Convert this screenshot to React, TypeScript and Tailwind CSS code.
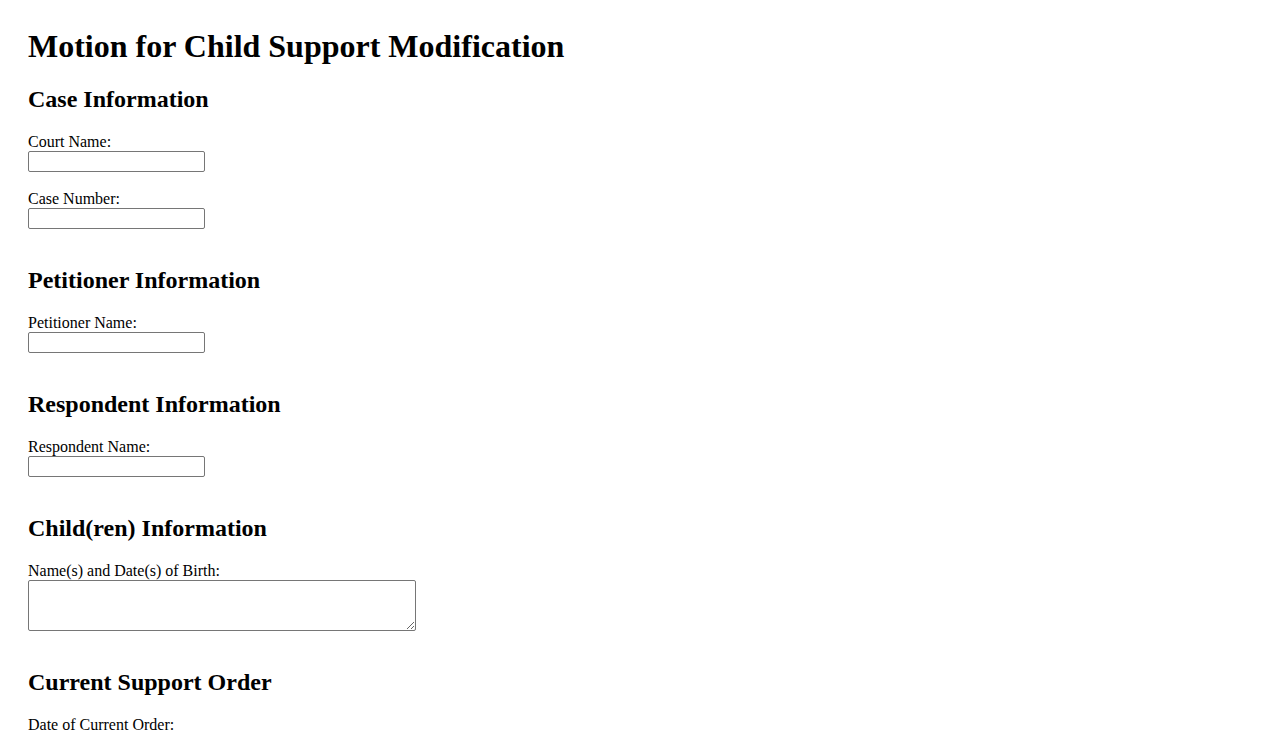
import React from "react";

const serif = { fontFamily: '"Liberation Serif", "Times New Roman", serif' };

function Field({ label, last }: { label: string; last?: boolean }) {
  return (
    <div className={last ? "mb-[37px]" : "mb-[18px]"}>
      <label className="block text-[16px] leading-[18px] text-black">{label}</label>
      <input
        type="text"
        className="block h-[21px] w-[177px] rounded-[2px] border border-[#767676] bg-white px-[2px] text-[13px] outline-none"
      />
    </div>
  );
}

function Section({ title, children }: { title: string; children: React.ReactNode }) {
  return (
    <section>
      <h2 className="mb-[20px] text-[24px] font-bold leading-[28px] text-black">{title}</h2>
      {children}
    </section>
  );
}

export default function App() {
  return (
    <div className="min-h-screen bg-white px-[28px] pt-[28px] text-black" style={serif}>
      <h1 className="mb-[20px] text-[32px] font-bold leading-[37px]">Motion for Child Support Modification</h1>

      <Section title="Case Information">
        <Field label="Court Name:" />
        <Field label="Case Number:" last />
      </Section>

      <Section title="Petitioner Information">
        <Field label="Petitioner Name:" last />
      </Section>

      <Section title="Respondent Information">
        <Field label="Respondent Name:" last />
      </Section>

      <Section title="Child(ren) Information">
        <div className="mb-[37px]">
          <label className="block text-[16px] leading-[18px]">Name(s) and Date(s) of Birth:</label>
          <textarea className="block h-[51px] w-[388px] rounded-[2px] border border-[#767676] bg-white text-[13px] outline-none" />
        </div>
      </Section>

      <Section title="Current Support Order">
        <div className="mb-[18px]">
          <label className="block text-[16px] leading-[18px]">Date of Current Order:</label>
          <input
            type="date"
            className="block h-[21px] w-[177px] rounded-[2px] border border-[#767676] bg-white text-[13px] outline-none"
          />
        </div>
        <Field label="Current Support Amount:" last />
      </Section>
    </div>
  );
}
